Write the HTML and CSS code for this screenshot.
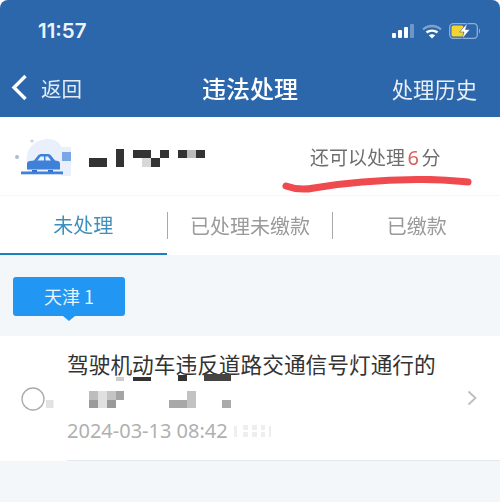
FILE: index.html
```html
<!DOCTYPE html>
<html lang="zh-CN">
<head>
<meta charset="utf-8">
<title>违法处理</title>
<link rel="stylesheet" href="styles.css">
</head>
<body>
<div class="page">
  <header class="header">
    <div class="status">
      <span class="time">11:57</span>
      <div class="status-icons">
        <svg class="signal" width="22" height="14" viewBox="0 0 22 14"><rect x="0" y="9" width="4" height="5" rx="1" fill="#fff"/><rect x="6" y="6" width="4" height="8" rx="1" fill="#fff"/><rect x="12" y="3" width="4" height="11" rx="1" fill="#fff"/><rect x="18" y="0" width="4" height="14" rx="1" fill="#6f97c6"/></svg>
        <svg class="wifi" width="20" height="15" viewBox="0 0 20 15"><path d="M1 5.500C6 .8 14 .8 19 5.500" fill="none" stroke="#7fa3cd" stroke-width="2.400"/><path d="M4.500 8.500C7.500 6 12.500 6 15.500 8.500" fill="none" stroke="#fff" stroke-width="2.400"/><path d="M10 14.500L6.800 11.200C8.600 9.800 11.400 9.800 13.200 11.200Z" fill="#fff"/></svg>
        <svg class="battery" width="32" height="16" viewBox="0 0 32 16"><rect x=".7" y=".7" width="27.600" height="14.600" rx="3.500" fill="none" stroke="#8fb0d4" stroke-width="1.300"/><rect x="2.500" y="2.500" width="12" height="11" rx="1.500" fill="#f3d430"/><path d="M30 5.500c1.300.4 1.300 4.600 0 5z" fill="#8fb0d4"/><path d="M18.500 0L10.500 9h4.500l-2 7 8-9.500h-4.500z" fill="#fff" stroke="#2c66ab" stroke-width=".6"/></svg>
      </div>
    </div>
    <nav class="nav">
      <div class="back">
        <svg width="18" height="28" viewBox="0 0 18 28"><path d="M16.500 2L5 13.500 16.500 25" fill="none" stroke="#fff" stroke-width="3.400"/></svg>
        <span>返回</span>
      </div>
      <h1 class="nav-title">违法处理</h1>
      <span class="nav-link">处理历史</span>
    </nav>
  </header>

  <section class="info">
    <svg class="car" width="60" height="42" viewBox="0 0 60 42">
      <path d="M13 28C11 14 22 5 34 5c6 0 10 2 14 8h9v29H48l-4-4H14z" fill="#e9f0fb"/>
      <rect x="48" y="18" width="9" height="9" fill="#7ba6e6"/>
      <circle cx="18" cy="7" r="1.600" fill="#c5cfdd"/>
      <circle cx="3" cy="23" r="2" fill="#aebccf"/>
      <path d="M13 30c0-2 1-3 3-3l4-.5 4-5c.8-1 2-1.500 3.500-1.500h6c1.500 0 2.700.5 3.500 1.500l4 5 3 .5c1.500.3 2 1.500 2 3v5.500H13z" fill="#3f80d8"/>
      <path d="M23.500 26.500l3-4h3.500v4zM31.500 22.500h2.500l3 4h-5.500z" fill="#e9f0fb"/>
      <rect x="18" y="36" width="5" height="2" fill="#2f6cc2"/>
      <rect x="34" y="36" width="5" height="2" fill="#2f6cc2"/>
      <rect x="7" y="37.500" width="42" height="2.800" fill="#3f80d8"/>
    </svg>
    <svg class="plate" width="116" height="18" viewBox="0 0 116 18">
      <g fill="#333"><rect x="0" y="9" width="18" height="9"/><rect x="27" y="0" width="8" height="18"/><rect x="44" y="1" width="18" height="8"/><rect x="62" y="9" width="9" height="9"/><rect x="71" y="1" width="9" height="8"/><rect x="89" y="1" width="9" height="8"/><rect x="107" y="1" width="9" height="8"/></g>
      <rect x="53" y="9" width="9" height="9" fill="#d8d8d8"/><rect x="98" y="1" width="9" height="8" fill="#bbb"/>
    </svg>
    <p class="score">还可以处理<em>6</em>分</p>
    <svg class="scribble" width="190" height="18" viewBox="0 0 190 18"><path d="M4 10C12 13 22 14 32 12C55 8 85 4 135 3.500C160 3 175 5 186 6" fill="none" stroke="#ef4b4f" stroke-width="7" stroke-linecap="round"/></svg>
  </section>

  <div class="tabs">
    <div class="tab active">未处理</div>
    <div class="tab"><span class="tab-label">已处理未缴款</span></div>
    <div class="tab">已缴款</div>
  </div>

  <main class="list">
    <div class="group">
      <span class="badge">天津 1</span>
    </div>
    <article class="item">
      <svg class="radio" width="34" height="26" viewBox="0 0 34 26">
        <circle cx="13" cy="13" r="11" fill="#fff" stroke="#aaa" stroke-width="1.300"/>
        <rect x="26" y="14" width="7.500" height="8" fill="#e2e2e2"/>
      </svg>
      <div class="item-body">
        <div class="item-text">
          <h2 class="item-title">驾驶机动车违反道路交通信号灯通行的</h2>
          <svg class="mosaic" width="164" height="34" viewBox="0 0 164 34">
            <rect x="49" y="3" width="8" height="4" fill="#ccc"/><rect x="66" y="3" width="18" height="4" fill="#333"/><rect x="111" y="1" width="9" height="6" fill="#333"/><rect x="137" y="0" width="27" height="7" fill="#444"/>
            <rect x="22" y="17" width="9" height="9" fill="#bdbdbd"/><rect x="31" y="17" width="9" height="9" fill="#e0e0e0"/><rect x="31" y="26" width="9" height="8" fill="#e0e0e0"/><rect x="40" y="17" width="9" height="9" fill="#c4c4c4"/><rect x="49" y="17" width="8" height="9" fill="#a5a5a5"/>
            <rect x="22" y="26" width="9" height="8" fill="#9a9a9a"/><rect x="40" y="26" width="9" height="8" fill="#9a9a9a"/>
            <rect x="102" y="26" width="18" height="8" fill="#a8a8a8"/><rect x="120" y="17" width="9" height="17" fill="#c2c2c2"/><rect x="155" y="26" width="9" height="8" fill="#ababab"/>
          </svg>
          <p class="item-date">2024-03-13 08:42<svg class="smudge" width="40" height="14" viewBox="0 0 40 14"><g fill="#eee"><rect x="0" y="2" width="3" height="11"/><rect x="9" y="1" width="5" height="5"/><rect x="9" y="8" width="5" height="5"/><rect x="18" y="1" width="5" height="5"/><rect x="18" y="8" width="5" height="5"/><rect x="27" y="1" width="4" height="5"/><rect x="27" y="8" width="4" height="5"/><rect x="35" y="2" width="2" height="11"/></g></svg></p>
        </div>
        <svg class="chevron" width="11" height="16" viewBox="0 0 11 16"><path d="M1.500 1.500L8.500 8l-7 6.500" fill="none" stroke="#bdbdbd" stroke-width="1.800"/></svg>
      </div>
    </article>
  </main>
</div>
</body>
</html>
```
FILE: styles.css
```css
* { box-sizing: border-box; margin: 0; padding: 0; }

html, body { height: 100%; }

body {
  background: #fff;
  font-family: "Noto Sans CJK SC", "Noto Sans", sans-serif;
  overflow: hidden;
}

.page {
  height: 502px;
  display: flex;
  flex-direction: column;
  filter: blur(0.35px);
}

.header {
  height: 117px;
  background: #2c66ab;
  color: #fff;
  border-radius: 8px 8px 0 0;
  padding-top: 18px;
  flex: none;
}

.status {
  display: flex;
  align-items: center;
  justify-content: space-between;
  height: 24px;
  padding: 0 19px 0 38px;
}

.time {
  font-family: Inter, Roboto, sans-serif;
  font-size: 20.500px;
  font-weight: 600;
  color: #eef3f9;
}

.status-icons {
  display: flex;
  align-items: center;
  gap: 7.500px;
  margin-top: 2px;
}

.nav {
  display: flex;
  align-items: center;
  justify-content: space-between;
  height: 30px;
  margin-top: 31px;
  padding: 0 23px 0 9px;
  position: relative;
}

.back {
  display: flex;
  align-items: center;
  gap: 14px;
  font-size: 20.500px;
  color: #e3ecf6;
}

.nav-title {
  font-size: 24px;
  font-weight: 500;
  position: absolute;
  left: 202px;
  line-height: 30px;
}

.nav-link {
  font-size: 21.300px;
  color: #e8eff7;
}

.info {
  height: 79px;
  flex: none;
  display: flex;
  align-items: center;
  padding-left: 14px;
  position: relative;
  border-bottom: 1px solid #f6f6f6;
}

.car { flex: none; margin-top: -2px; }

.plate { flex: none; margin-left: 15px; margin-top: 4px; }

.score {
  margin-left: 105px;
  margin-top: 1px;
  font-size: 19px;
  color: #6e6e6e;
  white-space: nowrap;
}

.score em {
  font-style: normal;
  color: #d9605c;
  font-family: "Noto Sans", sans-serif;
  font-size: 20px;
  margin: 0 2.500px;
}

.scribble {
  position: absolute;
  left: 282px;
  top: 59px;
}

.tabs {
  display: flex;
  height: 59px;
  flex: none;
}

.tab {
  flex: 1;
  display: flex;
  align-items: center;
  justify-content: center;
  font-size: 20px;
  color: #9a9a9a;
  position: relative;
  padding-bottom: 1px;
}

.tab.active {
  color: #3f8fbe;
  border-bottom: 2.500px solid #1b7fc0;
}

.tab-label {
  display: block;
  width: 100%;
  text-align: center;
  border-left: 1.500px solid #a9a9a9;
  border-right: 1.500px solid #a9a9a9;
  line-height: 27px;
}

.list {
  flex: 1;
  background: #f3f7f9;
}

.group {
  height: 81px;
  padding: 22px 0 0 13px;
}

.badge {
  display: block;
  width: 112px;
  height: 39px;
  line-height: 39px;
  background: #2196f3;
  color: #e8f4fe;
  border-radius: 3px;
  font-size: 18px;
  text-align: center;
  position: relative;
}

.badge::after {
  content: "";
  position: absolute;
  left: 50px;
  bottom: -5px;
  border-left: 6px solid transparent;
  border-right: 6px solid transparent;
  border-top: 5px solid #2196f3;
}

.item {
  height: 125px;
  background: #fff;
  display: flex;
  align-items: center;
  padding-left: 20px;
}

.radio { flex: none; margin-right: 13px; }

.item-body {
  flex: 1;
  height: 100%;
  display: flex;
  align-items: center;
  justify-content: space-between;
  border-bottom: 1.500px solid #e6e8ee;
  padding-right: 22px;
}

.item-text { padding-bottom: 3px; }

.item-title {
  font-size: 21.700px;
  font-weight: 400;
  color: #333;
  line-height: 28px;
  white-space: nowrap;
}

.mosaic {
  display: block;
  margin-top: -4px;
}

.item-date {
  font-family: "Noto Sans", sans-serif;
  font-size: 20px;
  color: #b0b0b0;
  line-height: 24px;
  margin-top: 11px;
  white-space: nowrap;
  display: flex;
  align-items: center;
  gap: 6px;
}

.chevron { flex: none; }
```
